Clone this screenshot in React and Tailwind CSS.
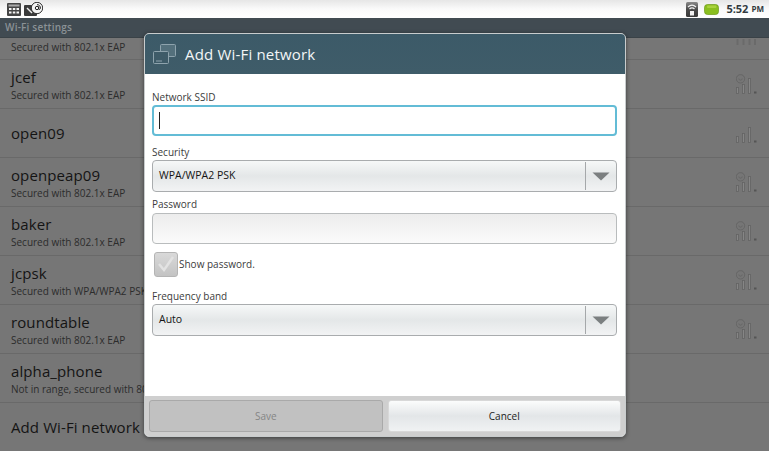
import React from 'react';

const NETWORKS = [
  { name: 'jcef', sub: 'Secured with 802.1x EAP', lock: true },
  { name: 'open09', sub: null, lock: false },
  { name: 'openpeap09', sub: 'Secured with 802.1x EAP', lock: true },
  { name: 'baker', sub: 'Secured with 802.1x EAP', lock: true },
  { name: 'jcpsk', sub: 'Secured with WPA/WPA2 PSK', lock: true },
  { name: 'roundtable', sub: 'Secured with 802.1x EAP', lock: true },
  { name: 'alpha_phone', sub: 'Not in range, secured with 802.1x EAP', lock: false, noSignal: true },
];

const Signal = ({ lock }) => (
  <svg width="21" height="20" viewBox="0 0 21 20" fill="none" className="shrink-0">
    {lock && (
      <g stroke="#626262" strokeWidth="0.8">
        <circle cx="4.500" cy="4.800" r="4.200" />
        <path d="M2.800 4.500c0 2.200 3.400 2.200 3.400 0" />
      </g>
    )}
    <rect x="0.500" y="13.500" width="2" height="6" fill="#868686" stroke="#636363" strokeWidth="0.800" />
    <rect x="6.500" y="10.500" width="2" height="9" fill="#868686" stroke="#636363" strokeWidth="0.800" />
    <rect x="12.500" y="4.500" width="2" height="15" fill="#868686" stroke="#636363" strokeWidth="0.800" />
    <rect x="18" y="17.500" width="2.500" height="2" fill="#555555" />
  </svg>
);

const Row = ({ name, sub, lock, noSignal }) => (
  <div className="h-[49px] shrink-0 flex items-center justify-between border-b border-[#696969] pl-[11px] pr-[12px]">
    <div className="flex flex-col whitespace-nowrap">
      <div className="text-[15px] leading-[20px] tracking-[0.1px] text-[#141414]">{name}</div>
      {sub && <div className="mt-[2px] text-[10px] leading-[12px] text-[#2c2c2c]">{sub}</div>}
    </div>
    {!noSignal && <Signal lock={lock} />}
  </div>
);

const Dropdown = ({ value }) => (
  <div className="h-[32px] rounded-[4px] border border-[#a9acae] bg-gradient-to-b from-[#f6f8f8] via-[#e4e7e8] to-[#f2f3f4] flex items-center justify-between">
    <span className="pl-[6px] text-[10.5px] font-medium text-[#141414]">{value}</span>
    <div className="h-[28px] w-[31px] border-l border-[#a5a8aa] flex items-center justify-center">
      <svg width="18" height="9" viewBox="0 0 18 9">
        <path d="M0.500 0.500h17l-8.500 8z" fill="#7b7f80" />
      </svg>
    </div>
  </div>
);

const FieldLabel = ({ children }) => (
  <div className="text-[10px] leading-[13px] text-[#3c3c3c]">{children}</div>
);

export default function App() {
  return (
    <div className="w-[778px] h-[469px] bg-white overflow-hidden font-['Open_Sans','Noto_Sans',sans-serif]">
      <div className="relative w-[769px] h-[451px] flex flex-col bg-[#767676]">
        {/* status bar */}
        <div className="h-[18px] shrink-0 bg-gradient-to-b from-[#e6e6e6] via-[#fafafa] to-[#ffffff] flex items-center justify-between pl-[7px] pr-[5px]">
          <div className="flex items-center gap-[3px]">
            <svg width="14" height="13" viewBox="0 0 14 13">
              <rect width="14" height="13" rx="1" fill="#454545" />
              <rect x="1.500" y="1.500" width="11" height="2" fill="#a9a9a9" />
              <rect x="2" y="5" width="2.500" height="2" fill="#f4f4f4" />
              <rect x="5.800" y="5" width="2.500" height="2" fill="#f4f4f4" />
              <rect x="9.500" y="5" width="2.500" height="2" fill="#f4f4f4" />
              <rect x="2" y="8.500" width="2.500" height="2" fill="#f4f4f4" />
              <rect x="5.800" y="8.500" width="2.500" height="2" fill="#f4f4f4" />
              <rect x="9.500" y="8.500" width="2.500" height="2" fill="#f4f4f4" />
            </svg>
            <svg width="19" height="14" viewBox="0 0 19 14">
              <rect y="3" width="13" height="11" rx="1" fill="#3a3a3a" />
              <path d="M3 6l5 5" stroke="#eee" strokeWidth="1.400" />
              <circle cx="13" cy="6" r="5.700" fill="#f4f4f4" stroke="#333" />
              <circle cx="13" cy="6" r="1.700" fill="none" stroke="#222" strokeWidth="1" />
              <path d="M14.700 4.400v2.400c0 1 1.700.8 1.700-.8 0-2-1.400-3.400-3.400-3.400" fill="none" stroke="#222" strokeWidth="1" />
            </svg>
          </div>
          <div className="flex items-center">
            <svg width="12" height="15" viewBox="0 0 12 15">
              <defs>
                <linearGradient id="wifiBody" x1="0" y1="0" x2="0" y2="1">
                  <stop offset="0" stopColor="#8a8a8a" />
                  <stop offset="0.5" stopColor="#4a4a4a" />
                  <stop offset="1" stopColor="#3a3a3a" />
                </linearGradient>
              </defs>
              <rect width="12" height="15" rx="1.500" fill="url(#wifiBody)" />
              <path d="M2 5c2.500-2.400 5.500-2.400 8 0M3.500 7c1.500-1.400 3.500-1.400 5 0" stroke="#f2f2f2" strokeWidth="1.200" fill="none" />
              <rect x="4" y="9" width="4" height="4.500" fill="#f2f2f2" />
            </svg>
            <svg width="15" height="11" viewBox="0 0 15 11" className="ml-[6px]">
              <rect x="0.500" y="0.500" width="14" height="10" rx="3" fill="#8abf1f" stroke="#6c9a17" strokeWidth="0.700" />
              <rect x="3" y="1.500" width="9.500" height="2.500" rx="1" fill="#a9d23d" />
            </svg>
            <span className="ml-[7px] text-[11px] font-bold text-[#333b3f]">5:52</span>
            <span className="ml-[3px] text-[8px] font-bold text-[#333b3f]">PM</span>
          </div>
        </div>

        {/* title bar */}
        <div className="h-[20px] shrink-0 bg-[#414b52] border-b border-[#3a4247] flex items-center pl-[5px]">
          <span className="text-[10px] font-semibold tracking-[0.2px] text-[#8b9296]">Wi-Fi settings</span>
        </div>

        {/* list behind the dialog */}
        <div className="flex flex-col">
          <div className="h-[22px] shrink-0 flex items-end justify-between border-b border-[#696969] pl-[11px] pr-[12px] overflow-hidden">
            <div className="text-[10px] leading-[12px] text-[#2c2c2c] pb-[6px]">Secured with 802.1x EAP</div>
            <svg width="21" height="6" viewBox="0 0 21 6" className="mb-[14px]">
              <path d="M1.500 0v6M7.500 0v6M13.500 0v6M19 0v6" stroke="#6a6a6a" strokeWidth="2" />
            </svg>
          </div>
          {NETWORKS.map((n) => (
            <Row key={n.name} {...n} />
          ))}
          <div className="h-[49px] shrink-0 flex items-center pl-[11px] text-[15px] tracking-[0.1px] text-[#141414]">
            Add Wi-Fi network
          </div>
        </div>

        {/* dialog */}
        <div className="absolute left-[144px] top-[33px] w-[482px] h-[404px] rounded-[5px] bg-white border border-[#c8cccd] shadow-[0_1px_4px_rgba(0,0,0,0.5)] overflow-hidden flex flex-col">
          <div className="h-[40px] shrink-0 bg-gradient-to-b from-[#3c5a68] to-[#3f5c69] flex items-center pl-[7px]">
            <svg width="25" height="22" viewBox="0 0 25 22" fill="none" stroke="#8ea3ad" strokeWidth="1">
              <rect x="8.500" y="1.500" width="15" height="12" rx="1" fill="#54707c" />
              <rect x="1.500" y="8.500" width="15" height="12" rx="1" fill="#3e5b68" />
              <path d="M4 18h6" />
            </svg>
            <span className="ml-[8px] text-[15px] tracking-[0.18px] text-[#f3f6f7]">Add Wi-Fi network</span>
          </div>
          <div className="flex-1 pl-[7px] pr-[8px] pt-[17px]">
            <FieldLabel>Network SSID</FieldLabel>
            <div className="mt-[1px] h-[31px] rounded-[4px] border-2 border-[#63bcd6] bg-white flex items-center pl-[5px]">
              <div className="w-px h-[17px] bg-[#222]" />
            </div>
            <div className="mt-[10px]"><FieldLabel>Security</FieldLabel></div>
            <div className="mt-[1px]"><Dropdown value="WPA/WPA2 PSK" /></div>
            <div className="mt-[6px]"><FieldLabel>Password</FieldLabel></div>
            <div className="mt-[2px] h-[31px] rounded-[4px] border border-[#b9bcbd] bg-gradient-to-b from-[#ececec] to-[#fbfbfb]" />
            <div className="mt-[7px] pl-[2px] flex items-center h-[26px]">
              <div className="w-[24px] h-[25px] rounded-[3px] border border-[#b4b4b4] bg-gradient-to-b from-[#d9d9d9] to-[#c3c3c3] flex items-center justify-center">
                <svg width="18" height="16" viewBox="0 0 18 16" fill="none">
                  <path d="M2 8l5 6L16 1" stroke="#e2e2e2" strokeWidth="2.500" />
                </svg>
              </div>
              <span className="ml-[1px] text-[10px] text-[#3c3c3c]">Show password.</span>
            </div>
            <div className="mt-[13px]"><FieldLabel>Frequency band</FieldLabel></div>
            <div className="mt-[1px]"><Dropdown value="Auto" /></div>
          </div>
          <div className="h-[40px] shrink-0 bg-[#cfcfcf] flex gap-[5px] px-[4px] py-[4px]">
            <div className="flex-1 rounded-[3px] border border-[#a9a9a9] bg-[#c1c1c1] flex items-center justify-center text-[10px] text-[#858585]">Save</div>
            <div className="flex-1 rounded-[3px] border border-[#d8d8d8] bg-gradient-to-b from-[#fbfcfc] via-[#e3e6e8] to-[#f0f2f3] flex items-center justify-center text-[10px] text-[#1c1c1c]">Cancel</div>
          </div>
        </div>
      </div>
    </div>
  );
}
